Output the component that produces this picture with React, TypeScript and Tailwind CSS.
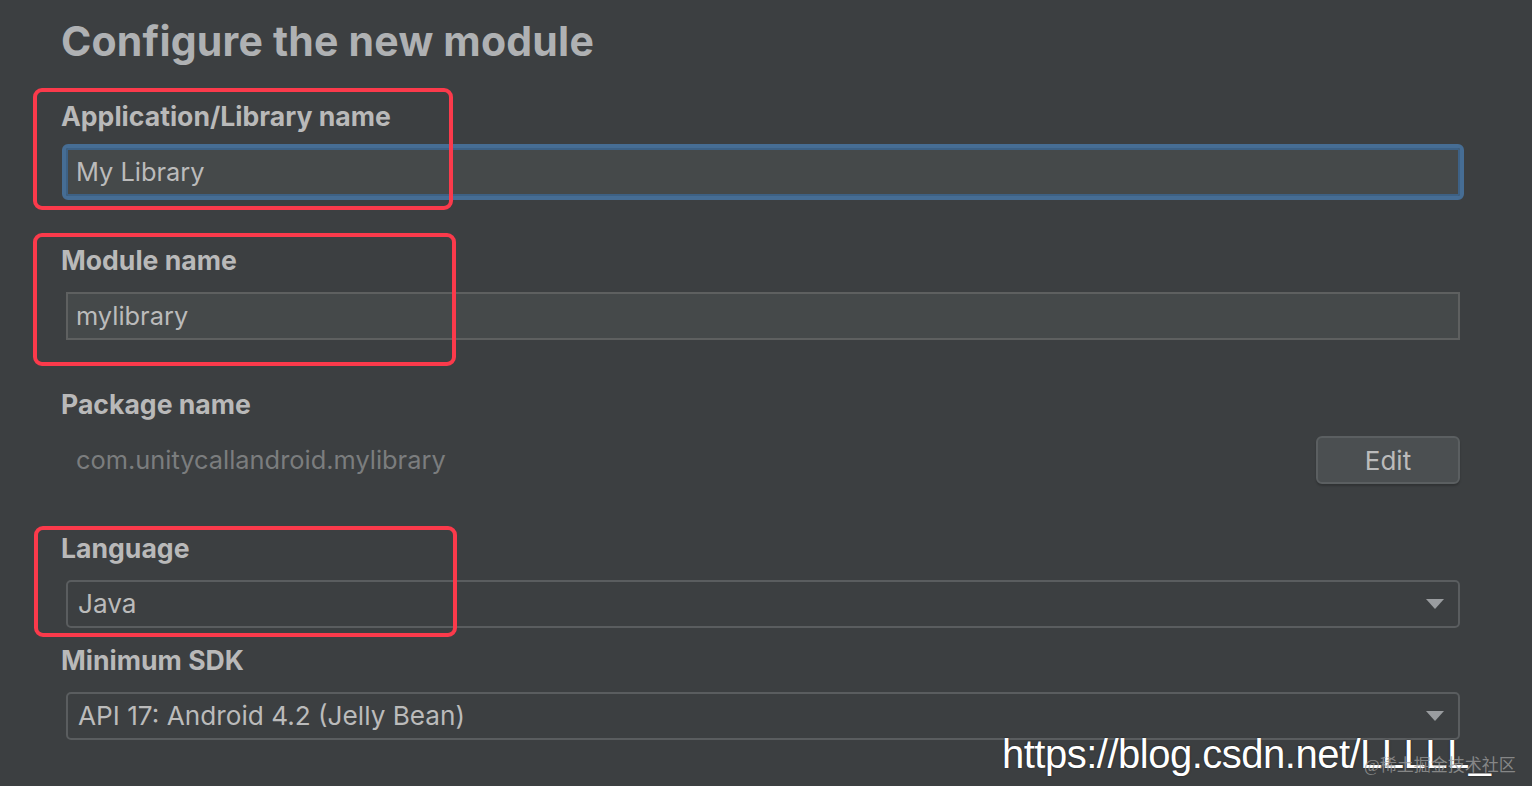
import React from "react";

const font = { fontFamily: "Inter, 'Noto Sans', sans-serif" };

const Arrow = () => (
  <svg width="18" height="10" viewBox="0 0 18 10" className="shrink-0">
    <path d="M0 0 L18 0 L9 10 Z" fill="#9a9da0" />
  </svg>
);

const Label = ({ children }: { children: React.ReactNode }) => (
  <div className="h-[48px] flex items-center text-[26.6px] font-bold text-[#b9b9b9]">
    {children}
  </div>
);

const TextField = ({ value, focused }: { value: string; focused?: boolean }) => (
  <div
    className={
      "mt-[7px] ml-[5px] w-[1394px] h-[48px] flex items-center pl-[8px] bg-[#45494a] text-[25.4px] text-[#bbbbbb] " +
      (focused
        ? "border-2 border-[#3d6185] outline-4 outline-[#466d94] rounded-[2px]"
        : "border-2 border-[#5e6060]")
    }
  >
    {value}
  </div>
);

const Select = ({ value }: { value: string }) => (
  <div className="mt-[7px] ml-[5px] w-[1394px] h-[48px] flex items-center justify-between pl-[10px] pr-[14px] border-2 border-[#5a5d5f] rounded-[5px] text-[26.2px] text-[#bbbbbb]">
    <span>{value}</span>
    <Arrow />
  </div>
);

const RedBox = ({ className }: { className: string }) => (
  <div className={"absolute border-[4px] border-[#fb3a4b] rounded-[9px] pointer-events-none " + className} />
);

export default function App() {
  return (
    <div
      className="relative w-[1532px] h-[786px] overflow-hidden bg-[#3c3f41] pl-[61px]"
      style={font}
    >
      <div className="h-[84px] flex items-center text-[41px] font-bold text-[#afb1b3] tracking-[0.2px]">
        Configure the new module
      </div>

      <div className="mt-[9px] h-[144px]">
        <Label>Application/Library name</Label>
        <TextField value="My Library" focused />
      </div>

      <div className="h-[144px]">
        <Label>Module name</Label>
        <TextField value="mylibrary" />
      </div>

      <div className="h-[144px]">
        <Label>Package name</Label>
        <div className="mt-[7px] ml-[5px] w-[1394px] h-[48px] flex items-center justify-between">
          <span className="pl-[10px] text-[25.4px] text-[#7b7d7e]">com.unitycallandroid.mylibrary</span>
          <button className="w-[144px] h-[48px] rounded-[6px] bg-[#4b4f51] border-2 border-[#5b5f61] text-[26px] text-[#bbbbbb] shadow-[0_2px_2px_rgba(0,0,0,0.2)]">
            Edit
          </button>
        </div>
      </div>

      <div className="h-[112px]">
        <Label>Language</Label>
        <Select value="Java" />
      </div>

      <div>
        <Label>Minimum SDK</Label>
        <Select value="API 17: Android 4.2 (Jelly Bean)" />
      </div>

      <RedBox className="left-[33px] top-[88px] w-[420px] h-[122px]" />
      <RedBox className="left-[33px] top-[233px] w-[423px] h-[133px]" />
      <RedBox className="left-[34px] top-[526px] w-[423px] h-[111px]" />

      <div
        className="absolute left-[1002px] top-[730px] text-[40px] leading-[48px] text-white tracking-[-0.5px] [text-shadow:0_0_2px_rgba(0,0,0,0.6)]"
        style={{ fontFamily: "'Liberation Sans', Arial, sans-serif" }}
      >
        https://blog.csdn.net/LLLLL_
      </div>
      <div
        className="absolute left-[1364px] top-[755px] text-[17px] leading-[22px] text-[#9a9a9a]/80"
        style={{ fontFamily: "'Liberation Serif', 'Noto Sans CJK SC', serif" }}
      >
        @稀土掘金技术社区
      </div>
    </div>
  );
}
